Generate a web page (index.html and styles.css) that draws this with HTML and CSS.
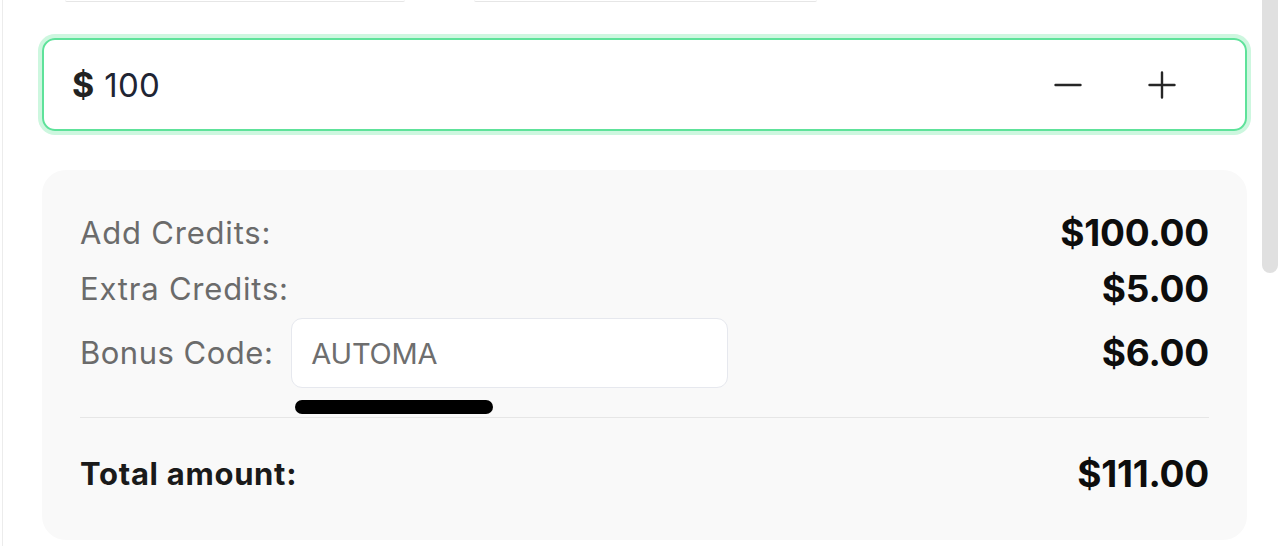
FILE: index.html
```html
<!DOCTYPE html>
<html lang="en">
<head>
<meta charset="utf-8">
<title>Add Credits</title>
<link rel="stylesheet" href="styles.css">
</head>
<body>
<div class="page">
  <div class="tabs">
    <div class="tab tab-a"></div>
    <div class="tab tab-b"></div>
  </div>

  <div class="amount-field">
    <span class="currency">$</span>
    <span class="amount">100</span>
    <div class="steppers">
      <button class="step" aria-label="Decrease">
        <svg width="28" height="28" viewBox="0 0 28 28"><path d="M1.5 14H26.5" stroke="#262626" stroke-width="2.4" stroke-linecap="round"/></svg>
      </button>
      <button class="step" aria-label="Increase">
        <svg width="28" height="28" viewBox="0 0 28 28"><path d="M1.5 14H26.5M14 1.5V26.5" stroke="#262626" stroke-width="2.4" stroke-linecap="round"/></svg>
      </button>
    </div>
  </div>

  <div class="summary">
    <div class="row">
      <span class="label">Add Credits:</span>
      <span class="value">$100.00</span>
    </div>
    <div class="row">
      <span class="label">Extra Credits:</span>
      <span class="value">$5.00</span>
    </div>
    <div class="row row-code">
      <div class="code-group">
        <span class="label">Bonus Code:</span>
        <div class="code-wrap">
          <div class="code-input">AUTOMA</div>
          <div class="code-bar"></div>
        </div>
      </div>
      <span class="value">$6.00</span>
    </div>
    <div class="divider"></div>
    <div class="row total">
      <span class="total-label">Total amount:</span>
      <span class="value">$111.00</span>
    </div>
  </div>
</div>
<div class="scroll-thumb"></div>
</body>
</html>
```

FILE: styles.css
```css
html, body {
  margin: 0;
  padding: 0;
  background: #ffffff;
}

body {
  font-family: Inter, "Noto Sans", "Liberation Sans", sans-serif;
  color: #1a1a1a;
  height: 546px;
  overflow: hidden;
}

.page {
  margin-left: 2px;
  border-left: 1px solid #ececec;
  width: 1259px;
  height: 546px;
  box-sizing: border-box;
  padding-left: 39px;
}

.tabs {
  display: flex;
  height: 2px;
  padding-left: 23px;
  gap: 69px;
}

.tab {
  height: 1px;
  border-bottom: 1px solid #e6e6e6;
  border-radius: 0 0 8px 8px;
}

.tab-a { width: 340px; }
.tab-b { width: 343px; }

.amount-field {
  margin-top: 36px;
  width: 1205px;
  height: 93px;
  box-sizing: border-box;
  border: 2px solid #5ee29a;
  border-radius: 13px;
  box-shadow: 0 0 0 4px #cdf7df;
  display: flex;
  align-items: center;
  padding-left: 28px;
  padding-right: 69px;
}

.currency {
  font-weight: 700;
  font-size: 34px;
  color: #222;
}

.amount {
  margin-left: 10px;
  font-size: 33px;
  color: #1f2533;
  letter-spacing: 0.3px;
}

.steppers {
  margin-left: auto;
  display: flex;
  gap: 66px;
  align-items: center;
}

.step {
  background: none;
  border: 0;
  padding: 0;
  width: 28px;
  height: 28px;
  display: flex;
}

.summary {
  margin-top: 39px;
  width: 1205px;
  height: 370px;
  box-sizing: border-box;
  background: #f9f9f9;
  border-radius: 24px;
  padding: 44px 38px 0 38px;
}

.row {
  display: flex;
  justify-content: space-between;
  align-items: center;
  height: 36px;
  margin-bottom: 20px;
}

.row-code {
  height: auto;
  margin-top: -8px;
  margin-bottom: 0;
  align-items: flex-start;
}

.row-code .label,
.row-code .value {
  line-height: 36px;
  margin-top: 17px;
}

.code-group {
  display: flex;
  gap: 18px;
  align-items: flex-start;
}

.code-wrap {
  display: flex;
  flex-direction: column;
  gap: 12px;
}

.code-input {
  width: 437px;
  height: 70px;
  box-sizing: border-box;
  background: #ffffff;
  border: 1px solid #e6e8ee;
  border-radius: 11px;
  padding-left: 19px;
  display: flex;
  align-items: center;
  font-size: 29px;
  color: #6e6e6e;
  letter-spacing: -0.2px;
}

.code-bar {
  margin-left: 4px;
  width: 198px;
  height: 14px;
  border-radius: 7px;
  background: #000;
}

.label {
  font-size: 31px;
  color: #6b6b6b;
  letter-spacing: 0.8px;
}

.row-code .label {
  letter-spacing: 0.5px;
}

.value {
  font-size: 37px;
  font-weight: 700;
  color: #0d0d0d;
  letter-spacing: -0.2px;
}

.divider {
  height: 1px;
  background: #e6e6e6;
  margin-top: 3px;
}

.total {
  margin-top: 37px;
}

.total-label {
  font-size: 31px;
  font-weight: 700;
  color: #1a1a1a;
  letter-spacing: 0.7px;
}

.scroll-thumb {
  position: fixed;
  top: 0;
  left: 1262px;
  width: 16px;
  height: 273px;
  background: #e0e0e0;
  border-radius: 0 0 8px 8px;
}
```
